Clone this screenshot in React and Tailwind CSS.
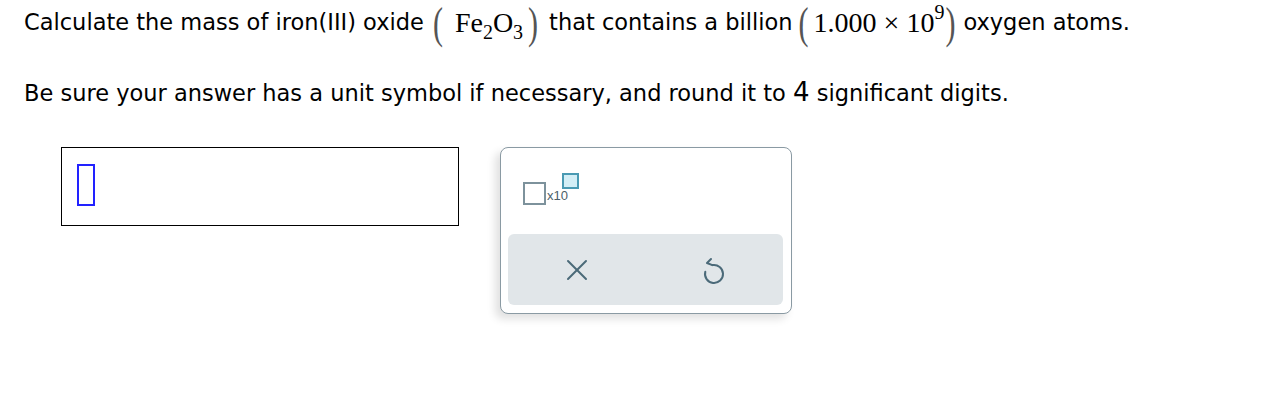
import React from 'react';

const sans = "font-['DejaVu_Sans','Verdana',sans-serif]";
const serif = "font-['Liberation_Serif','Times_New_Roman',serif]";

function Paren({ children }) {
  return (
    <span className={`${serif} inline-block text-[30px] leading-none text-[#555] scale-y-[1.5]`}>
      {children}
    </span>
  );
}

function UndoIcon() {
  return (
    <svg width="24" height="30" viewBox="0 0 24 30" fill="none" stroke="#4b6a79" strokeWidth="2" strokeLinecap="round" strokeLinejoin="round">
      <path d="M9 4 L5 8 L10.4 10.1" />
      <path d="M10.4 10.1 A9 9 0 1 1 3.3 16.7" />
    </svg>
  );
}

function CloseIcon() {
  return (
    <svg width="22" height="22" viewBox="0 0 22 22" fill="none" stroke="#4b6a79" strokeWidth="2" strokeLinecap="round">
      <path d="M2 2 L20 20" />
      <path d="M20 2 L2 20" />
    </svg>
  );
}

export default function App() {
  return (
    <div className={`w-[1269px] h-[403px] bg-white text-black ${sans} pl-[24px]`}>
      {/* Question */}
      <div className="h-[46px] flex items-center text-[22.5px] whitespace-nowrap">
        <span>Calculate the mass of iron(III) oxide</span>
        <span className="inline-flex items-center ml-[9px] mr-[11px]">
          <Paren>(</Paren>
          <span className={`${serif} text-[28px] leading-none pl-[12px] pr-[5px]`}>
            Fe<span className="text-[20px] relative top-[7px]">2</span>O<span className="text-[20px] relative top-[7px]">3</span>
          </span>
          <Paren>)</Paren>
        </span>
        <span>that contains a billion</span>
        <span className="inline-flex items-center ml-[6px] mr-[8px]">
          <Paren>(</Paren>
          <span className={`${serif} text-[28px] leading-none pl-[5px] pr-[1px]`}>
            1.000 × 10<span className="text-[20px] relative top-[-13px]">9</span>
          </span>
          <Paren>)</Paren>
        </span>
        <span>oxygen atoms.</span>
      </div>

      <div className="mt-[30px] h-[32px] leading-[32px] text-[22.5px] whitespace-nowrap">
        Be sure your answer has a unit symbol if necessary, and round it to <span className="text-[26px]">4</span> significant digits.
      </div>

      {/* Answer area */}
      <div className="mt-[39px] ml-[37px] flex items-start gap-[41px]">
        <div className="w-[398px] h-[79px] border border-black pl-[15px] pt-[16px]">
          <div className="w-[18px] h-[42px] border-2 border-[#2222ff]" />
        </div>

        <div className="w-[292px] h-[167px] rounded-[8px] border border-[#8a9aa3] bg-white shadow-[-5px_5px_8px_rgba(0,0,0,0.12)] flex flex-col">
          <div className="h-[86px] pl-[22px] pt-[25px]">
            <div className="flex items-start">
              <div className="w-[23px] h-[23px] mt-[9px] border-2 border-[#7d929c] bg-white" />
              <span className="text-[13px] leading-none text-[#4b5f6a] mt-[16px] ml-[1px] font-['Liberation_Sans',sans-serif]">x10</span>
              <div className="w-[17px] h-[16px] -ml-[6px] border-2 border-[#4a9ab3] bg-[#d3eef6]" />
            </div>
          </div>
          <div className="ml-[7px] mr-[8px] h-[71px] rounded-[6px] bg-[#e1e6e9] flex items-center">
            <div className="flex-1 flex justify-center">
              <CloseIcon />
            </div>
            <div className="flex-1 flex justify-center">
              <UndoIcon />
            </div>
          </div>
        </div>
      </div>
    </div>
  );
}
